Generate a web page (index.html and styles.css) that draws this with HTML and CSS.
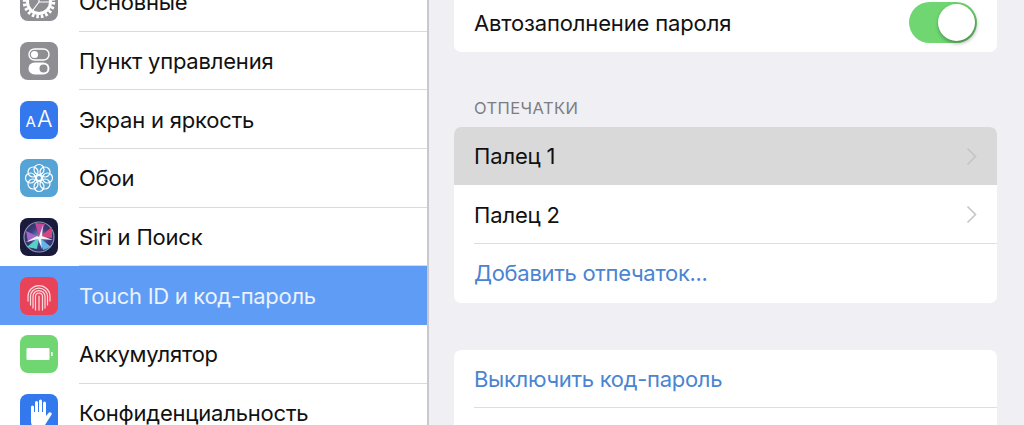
FILE: index.html
```html
<!DOCTYPE html>
<html lang="ru">
<head>
	<meta charset="UTF-8">
	<title>Touch ID и код-пароль</title>
	<link rel="stylesheet" href="styles.css">
</head>
<body>
	<div class="page">
		<!-- левая колонка -->
		<div class="sidebar">
			<div class="side-item">
				<div class="icon icon-grey">
					<svg viewBox="0 0 38 38" width="38" height="38">
						<circle cx="19" cy="19" r="14.5" fill="none" stroke="#fff" stroke-width="3.4" stroke-dasharray="2.6 1.95"/>
						<circle cx="19" cy="19" r="11.5" fill="none" stroke="#fff" stroke-width="3"/>
						<path d="M19 19 L19 9 M19 19 L29 19 M19 19 L13 27" stroke="#fff" stroke-width="1.2"/>
					</svg>
				</div>
				<div class="side-label">Основные</div>
			</div>
			<div class="side-item">
				<div class="icon icon-grey">
					<svg viewBox="0 0 38 38" width="38" height="38">
						<rect x="9" y="7" width="20" height="11" rx="5.5" fill="none" stroke="#fff" stroke-width="1.4"/>
						<circle cx="14.5" cy="12.5" r="3.6" fill="#fff"/>
						<rect x="8.5" y="20.5" width="21" height="12" rx="6" fill="#fff"/>
						<circle cx="23.5" cy="26.5" r="4" fill="#8e8e93"/>
					</svg>
				</div>
				<div class="side-label">Пункт управления</div>
			</div>
			<div class="side-item">
				<div class="icon icon-blue icon-text"><span class="small-a">A</span><span class="big-a">A</span></div>
				<div class="side-label">Экран и яркость</div>
			</div>
			<div class="side-item">
				<div class="icon icon-sky">
					<svg viewBox="0 0 38 38" width="38" height="38" fill="none" stroke="#fff" stroke-width="1.2">
						<circle cx="19" cy="10.5" r="5"/>
						<circle cx="19" cy="27.5" r="5"/>
						<circle cx="10.5" cy="19" r="5"/>
						<circle cx="27.5" cy="19" r="5"/>
						<circle cx="13" cy="13" r="5"/>
						<circle cx="25" cy="13" r="5"/>
						<circle cx="13" cy="25" r="5"/>
						<circle cx="25" cy="25" r="5"/>
						<circle cx="19" cy="19" r="2.6"/>
					</svg>
				</div>
				<div class="side-label">Обои</div>
			</div>
			<div class="side-item">
				<div class="icon icon-siri">
					<svg viewBox="0 0 38 38" width="38" height="38">
						<defs>
							<radialGradient id="siriBall" cx="50%" cy="50%" r="50%">
								<stop offset="0" stop-color="#7d8fc0"/>
								<stop offset="0.6" stop-color="#3f3f80"/>
								<stop offset="1" stop-color="#30306a"/>
							</radialGradient>
							<filter id="soft"><feGaussianBlur stdDeviation="0.7"/></filter>
						</defs>
						<circle cx="19" cy="19" r="15" fill="url(#siriBall)" stroke="#8f95ad" stroke-width="1.2"/>
						<g filter="url(#soft)">
							<path d="M19 19 L6 13 L8 24 Z" fill="#a566c8"/>
							<path d="M19 19 L15 5 L25 6 Z" fill="#c04c9c"/>
							<path d="M19 19 L32 9 L32 20 Z" fill="#d8457c"/>
							<path d="M19 19 L7 29 L17 31 Z" fill="#55d2c8"/>
							<path d="M19 19 L31 29 L23 32 Z" fill="#62b4ea"/>
							<path d="M19 19 L23 7 L22 18 L33 22 L21 21 L22 31 L18 21 L6 24 L17 18 Z" fill="#eef5f8"/>
						</g>
					</svg>
				</div>
				<div class="side-label">Siri и Поиск</div>
			</div>
			<div class="side-item side-item-active">
				<div class="icon icon-red">
					<svg viewBox="0 0 38 38" width="38" height="38" fill="none" stroke="#fbd9dd" stroke-width="1.25" stroke-linecap="round">
						<path d="M8 24 V19.5 A11 11 0 0 1 30 19.5 V24"/>
						<path d="M10.5 28 V19.5 A8.5 8.5 0 0 1 27.5 19.5 V28"/>
						<path d="M13 31 V19.5 A6 6 0 0 1 25 19.5 V31"/>
						<path d="M15.5 33 V19.5 A3.5 3.5 0 0 1 22.5 19.5 V33"/>
						<path d="M19 19 V33"/>
					</svg>
				</div>
				<div class="side-label">Touch ID и код-пароль</div>
			</div>
			<div class="side-item">
				<div class="icon icon-green">
					<svg viewBox="0 0 38 38" width="38" height="38">
						<rect x="6.5" y="13" width="23" height="12" rx="1" fill="#fff"/>
						<rect x="31" y="17" width="1.6" height="4" fill="#fff"/>
					</svg>
				</div>
				<div class="side-label">Аккумулятор</div>
			</div>
			<div class="side-item">
				<div class="icon icon-blue">
					<svg viewBox="0 0 38 38" width="38" height="38">
						<path d="M11 13 a1.5 1.5 0 0 1 3 0 V18 h1 V8.5 a1.5 1.5 0 0 1 3 0 V18 h1 V7 a1.5 1.5 0 0 1 3 0 V18 h1 V9 a1.5 1.5 0 0 1 3 0 V22 l2.5 -3 a1.7 1.7 0 0 1 2.8 2 L25 31 Q22 34 17 34 Q11 34 11 27 Z" fill="#fff"/>
					</svg>
				</div>
				<div class="side-label">Конфиденциальность</div>
			</div>
		</div>

		<!-- правая колонка -->
		<div class="content">
			<div class="card card-first">
				<div class="row">
					<div class="row-label">Автозаполнение пароля</div>
					<div class="switch"><div class="knob"></div></div>
				</div>
			</div>

			<div class="section-title">ОТПЕЧАТКИ</div>
			<div class="card">
				<div class="row row-pressed">
					<div class="row-label">Палец 1</div>
					<svg class="chevron" viewBox="0 0 11 19" width="11" height="19"><path d="M1.5 1.5 L9.5 9.5 L1.5 17.5" fill="none" stroke="#c5c5c8" stroke-width="1.7"/></svg>
				</div>
				<div class="row row-line">
					<div class="row-label">Палец 2</div>
					<svg class="chevron" viewBox="0 0 11 19" width="11" height="19"><path d="M1.5 1.5 L9.5 9.5 L1.5 17.5" fill="none" stroke="#c7c7cc" stroke-width="1.7"/></svg>
				</div>
				<div class="row">
					<div class="row-label row-link">Добавить отпечаток...</div>
				</div>
			</div>

			<div class="card card-last">
				<div class="row row-line">
					<div class="row-label row-link">Выключить код-пароль</div>
				</div>
				<div class="row"></div>
			</div>
		</div>
	</div>
</body>
</html>
```

FILE: styles.css
```css
* {
	box-sizing: border-box;
}
html, body {
	margin: 0;
	padding: 0;
}
body {
	font-family: "Inter", "Liberation Sans", sans-serif;
	color: #111;
	background: #efeff4;
}
.page {
	display: flex;
	width: 1024px;
	height: 425px;
	overflow: hidden;
}

/* sidebar */
.sidebar {
	flex: none;
	width: 429px;
	margin-top: -27px;
	background: #fff;
	border-right: 2px solid #c9c9cd;
}
.side-item {
	display: flex;
	align-items: center;
	height: 58.7px;
	padding-left: 20px;
	gap: 21px;
}
.side-label {
	flex: 1;
	display: flex;
	align-items: center;
	height: 100%;
	padding-top: 1px;
	font-size: 22px;
	letter-spacing: -0.2px;
	border-bottom: 1px solid #dadadd;
}
.side-item-active {
	background: #5f9cf5;
	color: #eaf2fe;
}
.side-item-active .side-label {
	letter-spacing: -0.3px;
	border-bottom: none;
}
.icon {
	flex: none;
	width: 38px;
	height: 38px;
	border-radius: 8px;
	overflow: hidden;
}
.icon svg {
	display: block;
}
.icon-grey { background: #8e8e93; }
.icon-blue { background: #3478ee; }
.icon-sky { background: #56a3d6; }
.icon-siri { background: #1a1a3c; }
.icon-red { background: #e9435a; }
.icon-green { background: #6fd672; }
.icon-text {
	display: flex;
	align-items: baseline;
	justify-content: center;
	gap: 1px;
	color: #fff;
	line-height: 37px;
}
.small-a {
	font-size: 15px;
}
.big-a {
	font-size: 23px;
	font-weight: 300;
}

/* content */
.content {
	flex: 1;
	padding: 0 27px 0 25px;
}
.card {
	background: #fff;
	border-radius: 7px;
	overflow: hidden;
}
.card-first {
	margin-top: -7px;
}
.card-first .row-label {
	padding-top: 2px;
}
.card-last {
	margin-top: 47px;
}
.section-title {
	height: 75px;
	padding: 0 0 9px 20px;
	display: flex;
	align-items: flex-end;
	font-size: 16.5px;
	letter-spacing: 0.4px;
	color: #7d7d82;
}
.row {
	display: flex;
	align-items: center;
	justify-content: space-between;
	position: relative;
	height: 58.7px;
	padding: 0 20px 0 20px;
}
.row-label {
	font-size: 22px;
	letter-spacing: -0.15px;
}
.row-link {
	color: #4a84d2;
	letter-spacing: -0.3px;
}
.row-pressed {
	background: #d9d9da;
}
.row-line::after {
	content: "";
	position: absolute;
	left: 20px;
	right: 0;
	bottom: 0;
	height: 1px;
	background: #dedee1;
}
.switch {
	width: 68px;
	height: 41px;
	padding: 2px;
	display: flex;
	justify-content: flex-end;
	border-radius: 21px;
	background: #6fd672;
}
.knob {
	width: 37px;
	height: 37px;
	border-radius: 50%;
	background: #fff;
	box-shadow: 1px 2px 4px rgba(0, 0, 0, 0.4);
}
```
